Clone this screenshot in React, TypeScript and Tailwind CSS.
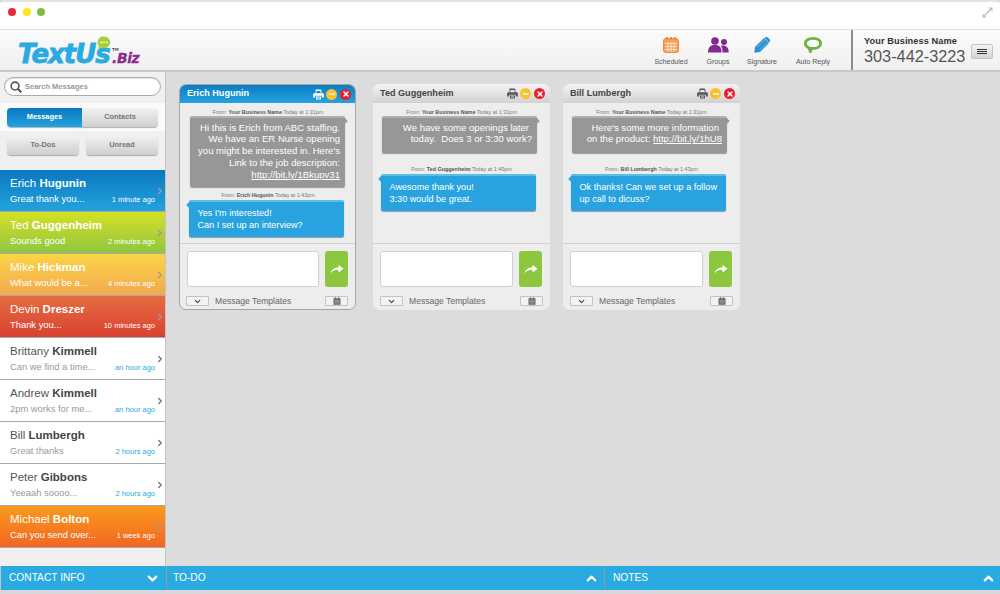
import { ChevronDown, ChevronRight, ChevronUp, Minus, X } from "lucide-react";

const font = { fontFamily: '"Liberation Sans", Arial, sans-serif' };

type Conversation = {
  first: string;
  last: string;
  preview: string;
  time: string;
  bg: string;
  light?: boolean;
};

const conversations: Conversation[] = [
  { first: "Erich", last: "Hugunin", preview: "Great thank you...", time: "1 minute ago", bg: "bg-gradient-to-b from-[#0a78bf] to-[#23a3de]" },
  { first: "Ted", last: "Guggenheim", preview: "Sounds good", time: "2 minutes ago", bg: "bg-gradient-to-b from-[#d6e021] to-[#8dc63f]" },
  { first: "Mike", last: "Hickman", preview: "What would be a...", time: "4 minutes ago", bg: "bg-gradient-to-b from-[#fbd444] to-[#f2a950]" },
  { first: "Devin", last: "Dreszer", preview: "Thank you...", time: "10 minutes ago", bg: "bg-gradient-to-b from-[#e56b43] to-[#d9412f]" },
  { first: "Brittany", last: "Kimmell", preview: "Can we find a time...", time: "an hour ago", bg: "bg-white", light: true },
  { first: "Andrew", last: "Kimmell", preview: "2pm works for me...", time: "an hour ago", bg: "bg-white", light: true },
  { first: "Bill", last: "Lumbergh", preview: "Great thanks", time: "2 hours ago", bg: "bg-white", light: true },
  { first: "Peter", last: "Gibbons", preview: "Yeeaah soooo...", time: "2 hours ago", bg: "bg-white", light: true },
  { first: "Michael", last: "Bolton", preview: "Can you send over...", time: "1 week ago", bg: "bg-gradient-to-b from-[#fa9a1c] to-[#f26522]" },
];

function Row({ c }: { c: Conversation }) {
  return (
    <div className={`h-[42px] shrink-0 flex items-center border-b border-[#a9a9a9] pl-[10px] ${c.bg}`}>
      <div className="flex-1 min-w-0">
        <div className={`text-[11.5px] leading-[15px] ${c.light ? "text-[#555]" : "text-white"}`}>
          {c.first} <b className={c.light ? "text-[#444]" : ""}>{c.last}</b>
        </div>
        <div className="flex justify-between items-baseline mt-[2px]">
          <span className={`text-[9.4px] leading-[12px] ${c.light ? "text-[#999]" : "text-white"}`}>{c.preview}</span>
          <span className={`text-[7.5px] leading-[12px] ${c.light ? "text-[#29abe2]" : "text-white"}`}>{c.time}</span>
        </div>
      </div>
      <ChevronRight size={10} strokeWidth={3.5} className={c.light ? "text-[#777]" : "text-[#9a9a9a]"} />
    </div>
  );
}

function Bubble({ who, time, side, second, children, h }: { who: string; time: string; side: "me" | "them"; second?: boolean; children: React.ReactNode; h: string }) {
  const me = side === "me";
  return (
    <div>
      <div className="text-[5.4px] leading-[8px] text-center whitespace-nowrap text-[#777]">
        From: <span className="font-bold text-[#555]">{who}</span> {time}
      </div>
      <div
        className={`relative w-[155px] ${h} ${second ? "mt-[1px]" : ""} rounded-[2px] border-t-2 leading-[11.8px] whitespace-nowrap text-white shadow-[0_1px_1px_rgba(0,0,0,0.35)] ${
          me
            ? "ml-[9px] text-[9.55px] bg-[#979797] border-[#b0b0b0] text-right pt-[3.5px] pr-[5px]"
            : "ml-[8px] text-[9.1px] bg-[#29a3df] border-[#5cbcea] text-left pt-[6px] pl-[8.5px]"
        }`}
      >
        <span className={`absolute top-[1px] w-[4px] h-[4px] rotate-45 ${me ? "-right-[2px] bg-[#979797]" : "-left-[2px] bg-[#29a3df]"}`} />
        {children}
      </div>
    </div>
  );
}

function Chat({ name, active, children, ml }: { name: string; active?: boolean; children: React.ReactNode; ml: string }) {
  return (
    <div className={`w-[177px] h-[226px] ${ml} flex flex-col rounded-[7px] bg-[#ededed] overflow-hidden ${active ? "border border-[#a5a5a5]" : ""}`}>
      <div
        className={`shrink-0 flex items-center pl-[7px] ${
          active ? "h-[18px] pr-[4px] bg-gradient-to-b from-[#0a7cc2] to-[#25a3e0] text-white" : "h-[19px] pr-[5px] bg-gradient-to-b from-[#f4f4f4] to-[#d2d2d2] text-[#444]"
        }`}
      >
        <span className="flex-1 text-[9.1px] font-bold">{name}</span>
        <svg width="11" height="11" viewBox="0 0 11 11" fill={active ? "#fff" : "#555"}>
          <path d="M2.5 0.5H7.5L8.5 1.5V4H7.6V2H3.4V4H2.5Z" />
          <path d="M1.3 4.2H9.7C10.3 4.2 10.8 4.7 10.8 5.3V8.4H8.8V6.8H2.2V8.4H0.2V5.3C0.2 4.7 0.7 4.2 1.3 4.2Z" />
          <path d="M3 7.6H8V10.6H3ZM3.9 8.4V8.9H7.1V8.4ZM3.9 9.4V9.9H7.1V9.4Z" fillRule="evenodd" />
        </svg>
        <span className="ml-[2px] w-[11px] h-[11px] rounded-full bg-[#fbc02d] flex items-center justify-center">
          <Minus size={8} strokeWidth={4} className="text-white" />
        </span>
        <span className="ml-[3px] w-[11px] h-[11px] rounded-full bg-[#e5202e] flex items-center justify-center">
          <X size={8} strokeWidth={4} className="text-white" />
        </span>
      </div>
      <div className={`h-[140px] shrink-0 pt-[5px] flex flex-col gap-[4px] ${active ? "pl-[1px]" : ""}`}>{children}</div>
      <div className="border-t border-[#d2d2d2] flex-1 px-[7px] pt-[7px]">
        <div className="flex gap-[6px]">
          <div className="w-[133px] h-[36px] bg-white rounded-[3px] border border-[#d0d0d0]" />
          <div className="w-[23px] h-[36px] rounded-[3px] bg-[#8dc63f] flex items-center justify-center">
            <svg width="14" height="10" viewBox="0 0 14 10">
              <path d="M0.5 9.5C1.5 5.5 4.5 3.6 8.5 3.6V0.8L13.5 4.8L8.5 8.6V5.8C5 5.6 2.5 6.8 0.5 9.5Z" fill="#fff" />
            </svg>
          </div>
        </div>
        <div className={`flex items-center mt-[9px] ${active ? "-ml-[1px]" : ""}`}>
          <div className="w-[23px] h-[10px] border border-[#c2c2c2] rounded-[1px] bg-[#f2f2f2] flex items-center justify-center">
            <ChevronDown size={9} strokeWidth={3} className="text-[#444]" />
          </div>
          <span className="ml-[6px] flex-1 text-[8.6px] leading-[10px] text-[#666]">Message Templates</span>
          <div className="w-[23px] h-[10px] border border-[#c2c2c2] rounded-[1px] bg-[#f2f2f2] flex items-center justify-center">
            <svg width="8" height="8" viewBox="0 0 8 8" fill="#666">
              <path d="M0.5 1.2H2V0.2H3V1.2H5V0.2H6V1.2H7.5V7.8H0.5Z" />
              <path d="M1.5 3.2H6.5M1.5 4.6H6.5M1.5 6H6.5" stroke="#ccc" strokeWidth="0.5" />
            </svg>
          </div>
        </div>
      </div>
    </div>
  );
}

function ToolItem({ label, w, children }: { label: string; w: string; children: React.ReactNode }) {
  return (
    <div className={`${w} flex flex-col items-center`}>
      <div className="h-[18px] flex items-center justify-center">{children}</div>
      <span className="mt-[3px] text-[7px] leading-[9px] text-[#555]">{label}</span>
    </div>
  );
}

export default function App() {
  return (
    <div className="w-[1000px] h-[594px] overflow-hidden flex flex-col bg-[#d8d8d8]" style={font}>
      {/* window chrome */}
      <div className="h-[30px] shrink-0 bg-white border-t-2 border-[#e4e4e4] border-b border-b-[#e2e2e2] rounded-t-[4px] flex items-start pt-[6px] pl-[8px] pr-[7px] gap-[6.5px]">
        <span className="w-[8px] h-[8px] rounded-full bg-[#ee2737]" />
        <span className="w-[8px] h-[8px] rounded-full bg-[#fce51e]" />
        <span className="w-[8px] h-[8px] rounded-full bg-[#7fbb42]" />
        <svg className="ml-auto -mt-[1px]" width="11" height="11" viewBox="0 0 11 11" stroke="#bbb" fill="#bbb">
          <path d="M2 9L9 2" strokeWidth="1.2" />
          <path d="M6.5 0.5H10.5V4.5Z M0.5 6.5V10.5H4.5Z" stroke="none" />
        </svg>
      </div>

      {/* toolbar */}
      <div className="h-[42px] shrink-0 flex bg-gradient-to-b from-[#fbfbfb] to-[#f0f0f0] border-b-2 border-[#c9c9c9]">
        <div
          className="relative w-[160px] pl-[18px] pt-[12px] italic font-bold text-[26px] leading-[25px] tracking-[-1px] text-[#29abe2] [-webkit-text-stroke:0.8px_#29abe2]"
          style={{ fontFamily: '"DejaVu Sans", sans-serif' }}
        >
          TextUs
          <span className="absolute left-[112px] top-[17px] not-italic text-[4px] leading-[5px] tracking-normal text-[#555] [-webkit-text-stroke:0]">TM</span>
          <span className="absolute left-[112px] top-[20px] text-[14px] leading-[16px] tracking-[-0.4px] text-[#8e2a8e] [-webkit-text-stroke:0.3px_#8e2a8e]">.Biz</span>
          <svg className="absolute left-[97px] top-[6px]" width="14" height="14" viewBox="0 0 14 14">
            <path d="M7 0.5a6.2 5.8 0 1 1-3 10.9L1 13l1-3A6 5.8 0 0 1 7 0.5Z" fill="#a6cf38" />
            <circle cx="4.2" cy="6.3" r="0.9" fill="#fff" />
            <circle cx="7" cy="6.3" r="0.9" fill="#fff" />
            <circle cx="9.8" cy="6.3" r="0.9" fill="#fff" />
          </svg>
        </div>
        <div className="ml-[487px] flex pt-[6px]">
          <ToolItem label="Scheduled" w="w-[48px]">
            <svg width="16" height="16" viewBox="0 0 16 16">
              <rect x="0.5" y="1.5" width="15" height="14" rx="2.5" fill="#f6a05a" stroke="#ee8c3c" />
              <rect x="3" y="0" width="2" height="3" fill="#ee8c3c" />
              <rect x="7" y="0" width="2" height="3" fill="#ee8c3c" />
              <rect x="11" y="0" width="2" height="3" fill="#ee8c3c" />
              <path d="M2 6.5H14M2 9.5H14M2 12.5H14M5 5V15M8 5V15M11 5V15" stroke="#fde3cc" strokeWidth="1" />
            </svg>
          </ToolItem>
          <ToolItem label="Groups" w="w-[46px]">
            <svg width="21" height="16" viewBox="0 0 21 16" fill="#812a8f">
              <circle cx="7" cy="4" r="3.8" />
              <path d="M0 15.5C0 10.5 2 8 7 8C12 8 13.5 10.5 13.5 15.5Z" />
              <circle cx="16" cy="5" r="3" />
              <path d="M14.5 15.5C14.5 12 14 10 12.8 9C16.5 7.6 20.7 9.2 20.7 15.5Z" />
            </svg>
          </ToolItem>
          <ToolItem label="Signature" w="w-[42px]">
            <svg width="16" height="16" viewBox="0 0 16 16">
              <path d="M0.3 15.7L1 10L10 1L15 6L6 15Z" fill="#2a8fd6" />
              <path d="M11 0.5C12 -0.2 13 -0.2 14 0.6L15.4 2C16.2 3 16.2 4 15.5 5L15 5.4L10.6 1Z" fill="#2a8fd6" />
              <path d="M3 10.4L10.6 2.8M5.6 13L13.2 5.4" stroke="#9fd0f0" strokeWidth="0.7" />
            </svg>
          </ToolItem>
          <ToolItem label="Auto Reply" w="w-[60px]">
            <svg width="18" height="16" viewBox="0 0 18 16">
              <path d="M9 1.4C13.4 1.4 16.6 3.4 16.6 6.4C16.6 9.4 13.4 11.4 9 11.4C8.4 11.4 7.9 11.4 7.4 11.3L6.4 14.2L4.8 10.7C2.8 9.8 1.4 8.3 1.4 6.4C1.4 3.4 4.6 1.4 9 1.4Z" fill="#fff" stroke="#6cb33f" strokeWidth="2.8" />
            </svg>
          </ToolItem>
        </div>
        <div className="ml-[8px] w-[2px] bg-[#8c8c8c]" />
        <div className="flex-1 flex items-center pl-[11px] pr-[7px]">
          <div className="flex-1">
            <div className="text-[9.2px] leading-[12px] font-bold text-[#333] tracking-[0.1px]">Your Business Name</div>
            <div className="text-[16.3px] leading-[18px] text-[#555]">303-442-3223</div>
          </div>
          <div className="w-[22px] h-[15px] mt-[3px] rounded-[2px] bg-gradient-to-b from-[#f5f5f5] to-[#d4d4d4] border border-[#c4c4c4] flex items-center justify-center">
            <div className="w-[10px] flex flex-col gap-[1px]">
              <span className="h-[1px] bg-[#333]" />
              <span className="h-[1px] bg-[#333]" />
              <span className="h-[1px] bg-[#333]" />
            </div>
          </div>
        </div>
      </div>

      <div className="flex h-[494px] shrink-0 bg-[#dcdcdc]">
        {/* sidebar */}
        <div className="w-[166px] shrink-0 bg-[#f0f0f0] border-r border-[#c4c4c4] flex flex-col pt-[5px]">
          <div className="mx-[4px] w-[157px] h-[19px] rounded-full bg-white border border-[#a9a9a9] flex items-center pl-[5px] shadow-[inset_0_1px_1px_rgba(0,0,0,0.12)]">
            <svg width="12" height="12" viewBox="0 0 11 11" fill="none" stroke="#555" strokeWidth="1.5">
              <circle cx="4.6" cy="4.6" r="3.6" />
              <path d="M7.3 7.3L10.3 10.3" strokeWidth="2" />
            </svg>
            <span className="ml-[3px] text-[7.5px] font-bold text-[#999]">Search Messages</span>
          </div>
          <div className="mt-[7px] h-[28px] bg-[#fafafa] px-[7px] flex items-center">
            <div className="flex w-[151px] h-[19px] rounded-[4px] overflow-hidden shadow-[0_1px_1px_rgba(0,0,0,0.3)] text-[7.4px] font-bold">
              <div className="w-[75px] bg-gradient-to-b from-[#0a78bf] to-[#23a3de] text-white flex items-center justify-center">Messages</div>
              <div className="flex-1 bg-gradient-to-b from-[#f2f2f2] to-[#cfcfcf] text-[#777] flex items-center justify-center">Contacts</div>
            </div>
          </div>
          <div className="mt-[4px] px-[7px] flex gap-[7px] text-[7.4px] font-bold text-[#777]">
            <div className="w-[72px] h-[20px] rounded-[4px] bg-gradient-to-b from-[#f2f2f2] to-[#cfcfcf] shadow-[0_1px_1px_rgba(0,0,0,0.3)] flex items-center justify-center">To-Dos</div>
            <div className="w-[72px] h-[20px] rounded-[4px] bg-gradient-to-b from-[#f2f2f2] to-[#cfcfcf] shadow-[0_1px_1px_rgba(0,0,0,0.3)] flex items-center justify-center">Unread</div>
          </div>
          <div className="mt-[15px] flex flex-col">
            {conversations.map((c) => (
              <Row key={c.first + c.last} c={c} />
            ))}
          </div>
        </div>

        {/* chats */}
        <div className="flex-1 flex pt-[12px] items-start">
          <Chat name="Erich Hugunin" active ml="ml-[13px]">
            <Bubble who="Your Business Name" time="Today at 1:31pm" side="me" h="h-[71px]">
              Hi this is Erich from ABC staffing.
              <br />
              We have an ER Nurse opening
              <br />
              you might be interested in. Here's
              <br />
              Link to the job description:
              <br />
              <span className="underline">http://bit.ly/1Bkupv31</span>
            </Bubble>
            <Bubble second who="Erich Hugunin" time="Today at 1:43pm" side="them" h="h-[37px]">
              Yes I'm interested!
              <br />
              Can I set up an interview?
            </Bubble>
          </Chat>
          <Chat name="Ted Guggenheim" ml="ml-[17px]">
            <Bubble who="Your Business Name" time="Today at 1:31pm" side="me" h="h-[37px]">
              <span className="pr-[3px]">We have some openings later</span>
              <br />
              today.&nbsp; Does 3 or 3:30 work?
            </Bubble>
            <div className="mt-[8px]">
              <Bubble second who="Ted Guggenheim" time="Today at 1:40pm" side="them" h="h-[37px]">
                Awesome thank you!
                <br />
                3:30 would be great.
              </Bubble>
            </div>
          </Chat>
          <Chat name="Bill Lumbergh" ml="ml-[13px]">
            <Bubble who="Your Business Name" time="Today at 1:31pm" side="me" h="h-[37px]">
              <span className="pr-[3px]">Here's some more information</span>
              <br />
              on the product: <span className="underline">http://bit.ly/1hU8</span>
            </Bubble>
            <div className="mt-[8px]">
              <Bubble second who="Bill Lumbergh" time="Today at 1:43pm" side="them" h="h-[37px]">
                Ok thanks! Can we set up a follow
                <br />
                up call to dicuss?
              </Bubble>
            </div>
          </Chat>
        </div>
      </div>

      {/* bottom bars */}
      <div className="h-[24px] shrink-0 flex bg-[#29abe2] text-white text-[10.2px]">
        <div className="w-[166px] pl-[8px] pr-[6px] flex items-center justify-between border-l border-[#c4c4c4]">
          CONTACT INFO
          <ChevronDown size={15} strokeWidth={3.5} />
        </div>
        <div className="w-[1px] bg-[#999]" />
        <div className="w-[437px] pl-[6px] pr-[5px] flex items-center justify-between">
          TO-DO
          <ChevronUp size={15} strokeWidth={3.5} />
        </div>
        <div className="w-[1px] bg-[#999]" />
        <div className="flex-1 pl-[8px] pr-[4px] flex items-center justify-between">
          NOTES
          <ChevronUp size={15} strokeWidth={3.5} />
        </div>
      </div>
    </div>
  );
}
